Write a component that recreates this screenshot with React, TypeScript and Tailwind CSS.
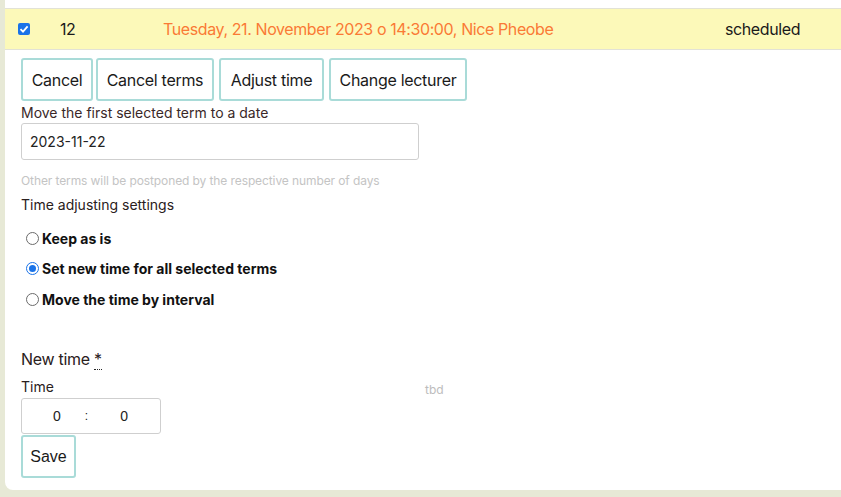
import React from "react";

const font = { fontFamily: "Inter, 'Noto Sans', sans-serif" };

function Btn({ children, className = "" }: { children: React.ReactNode; className?: string }) {
  return (
    <button
      className={`h-[43px] flex items-center justify-center border-2 border-[#a9dbd8] rounded-[3px] bg-white text-[16px] text-[#1a1a1a] ${className}`}
    >
      {children}
    </button>
  );
}

function Radio({ checked, label }: { checked?: boolean; label: string }) {
  return (
    <label className="flex items-center h-[30.5px] pl-[5px]">
      <span
        className={`w-[13px] h-[13px] rounded-full border ${checked ? "border-[#1a73e8] bg-white" : "border-[#6b6b6b] bg-white"} flex items-center justify-center`}
      >
        {checked && <span className="w-[7px] h-[7px] rounded-full bg-[#1a73e8]" />}
      </span>
      <span className="ml-[3px] text-[14px] font-bold text-[#111]">{label}</span>
    </label>
  );
}

export default function App() {
  return (
    <div className="w-[841px] h-[497px] bg-[#e7e9d6] overflow-hidden" style={font}>
      <div className="ml-[5px] h-[490px] bg-white rounded-bl-[8px]">
        <div className="h-[8px]" />
        <div className="h-[42px] bg-[#fcf9b9] border-y border-[#e2e2d6] flex items-center text-[16px] tracking-[-0.4px]">
          <div className="w-[12px] h-[12px] ml-[13px] rounded-[2px] bg-[#1a73e8] flex items-center justify-center">
            <svg width="10" height="10" viewBox="0 0 10 10">
              <path d="M1.5 5.2 L4 7.6 L8.6 2.4" stroke="white" strokeWidth="1.8" fill="none" />
            </svg>
          </div>
          <div className="ml-[30px] w-[103px] text-[#1a1a1a]">12</div>
          <div className="text-[#fa7a35] w-[562px]">Tuesday, 21. November 2023 o 14:30:00, Nice Pheobe</div>
          <div className="text-[#1a1a1a]">scheduled</div>
        </div>
        <div className="pl-[16px]">
          <div className="flex mt-[8px] tracking-[-0.3px]">
            <Btn className="w-[72px]">Cancel</Btn>
            <Btn className="w-[118px] ml-[3px]">Cancel terms</Btn>
            <Btn className="w-[105px] ml-[5px]">Adjust time</Btn>
            <Btn className="w-[138px] ml-[5px]">Change lecturer</Btn>
          </div>
          <div className="text-[14px] text-[#3a2828] mt-[2px] leading-[20px]">Move the first selected term to a date</div>
          <div className="w-[398px] h-[37px] border border-[#cfcfcf] rounded-[3px] flex items-center pl-[8px] text-[14px] text-[#222]">
            2023-11-22
          </div>
          <div className="text-[12px] text-[#c4c4c4] mt-[13px] leading-[16px] tracking-[-0.1px]">Other terms will be postponed by the respective number of days</div>
          <div className="text-[14px] text-[#2a2020] mt-[6px] leading-[20px]">Time adjusting settings</div>
          <div className="mt-[8px] flex flex-col">
            <Radio label="Keep as is" />
            <Radio checked label="Set new time for all selected terms" />
            <Radio label="Move the time by interval" />
          </div>
          <div className="mt-[34.5px] text-[16px] text-[#2a2020] leading-[20px] tracking-[-0.3px]">
            New time <span className="border-b border-dotted border-[#222]">*</span>
          </div>
          <div className="flex mt-[9px]">
            <div>
              <div className="text-[14px] text-[#2a2020] leading-[18px]">Time</div>
              <div className="w-[140px] h-[36px] mt-[2px] border border-[#cfcfcf] rounded-[3px] flex items-center text-[14px] text-[#222] font-['Liberation_Sans',Arial,sans-serif]">
                <span className="ml-[31px]">0</span>
                <span className="ml-[24px] text-[12px]">:</span>
                <span className="ml-[32px]">0</span>
              </div>
            </div>
            <div className="ml-[264px] mt-[3px] text-[12px] text-[#bdbdbd]">tbd</div>
          </div>
          <div className="mt-[1px]">
            <Btn className="w-[55px] font-['Liberation_Sans',Arial,sans-serif]">Save</Btn>
          </div>
        </div>
      </div>
    </div>
  );
}
